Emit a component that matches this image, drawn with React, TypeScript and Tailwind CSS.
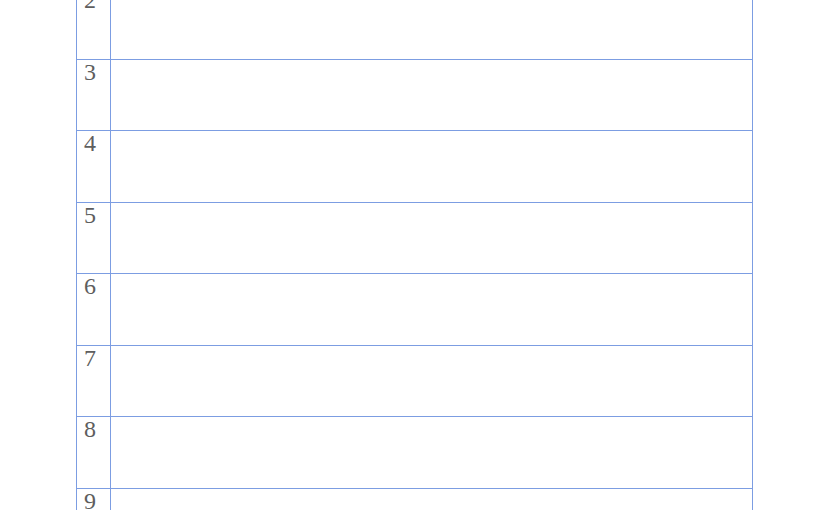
export default function App() {
  const rows = [2, 3, 4, 5, 6, 7, 8, 9];
  return (
    <div className="h-[510px] overflow-hidden bg-white">
      <div className="ml-[76px] mt-[-12px] w-[677px] border-x border-[#7c9de2]">
        {rows.map((n) => (
          <div key={n} className="flex h-[71.5px] border-b border-[#7c9de2]">
            <div className="w-[34px] shrink-0 border-r border-[#7c9de2] pl-[7px] pt-0 text-[24px] leading-[24px] text-[#5e5e5e] [font-family:'Liberation_Serif',serif]">
              {n}
            </div>
            <div className="flex-1" />
          </div>
        ))}
      </div>
    </div>
  );
}
